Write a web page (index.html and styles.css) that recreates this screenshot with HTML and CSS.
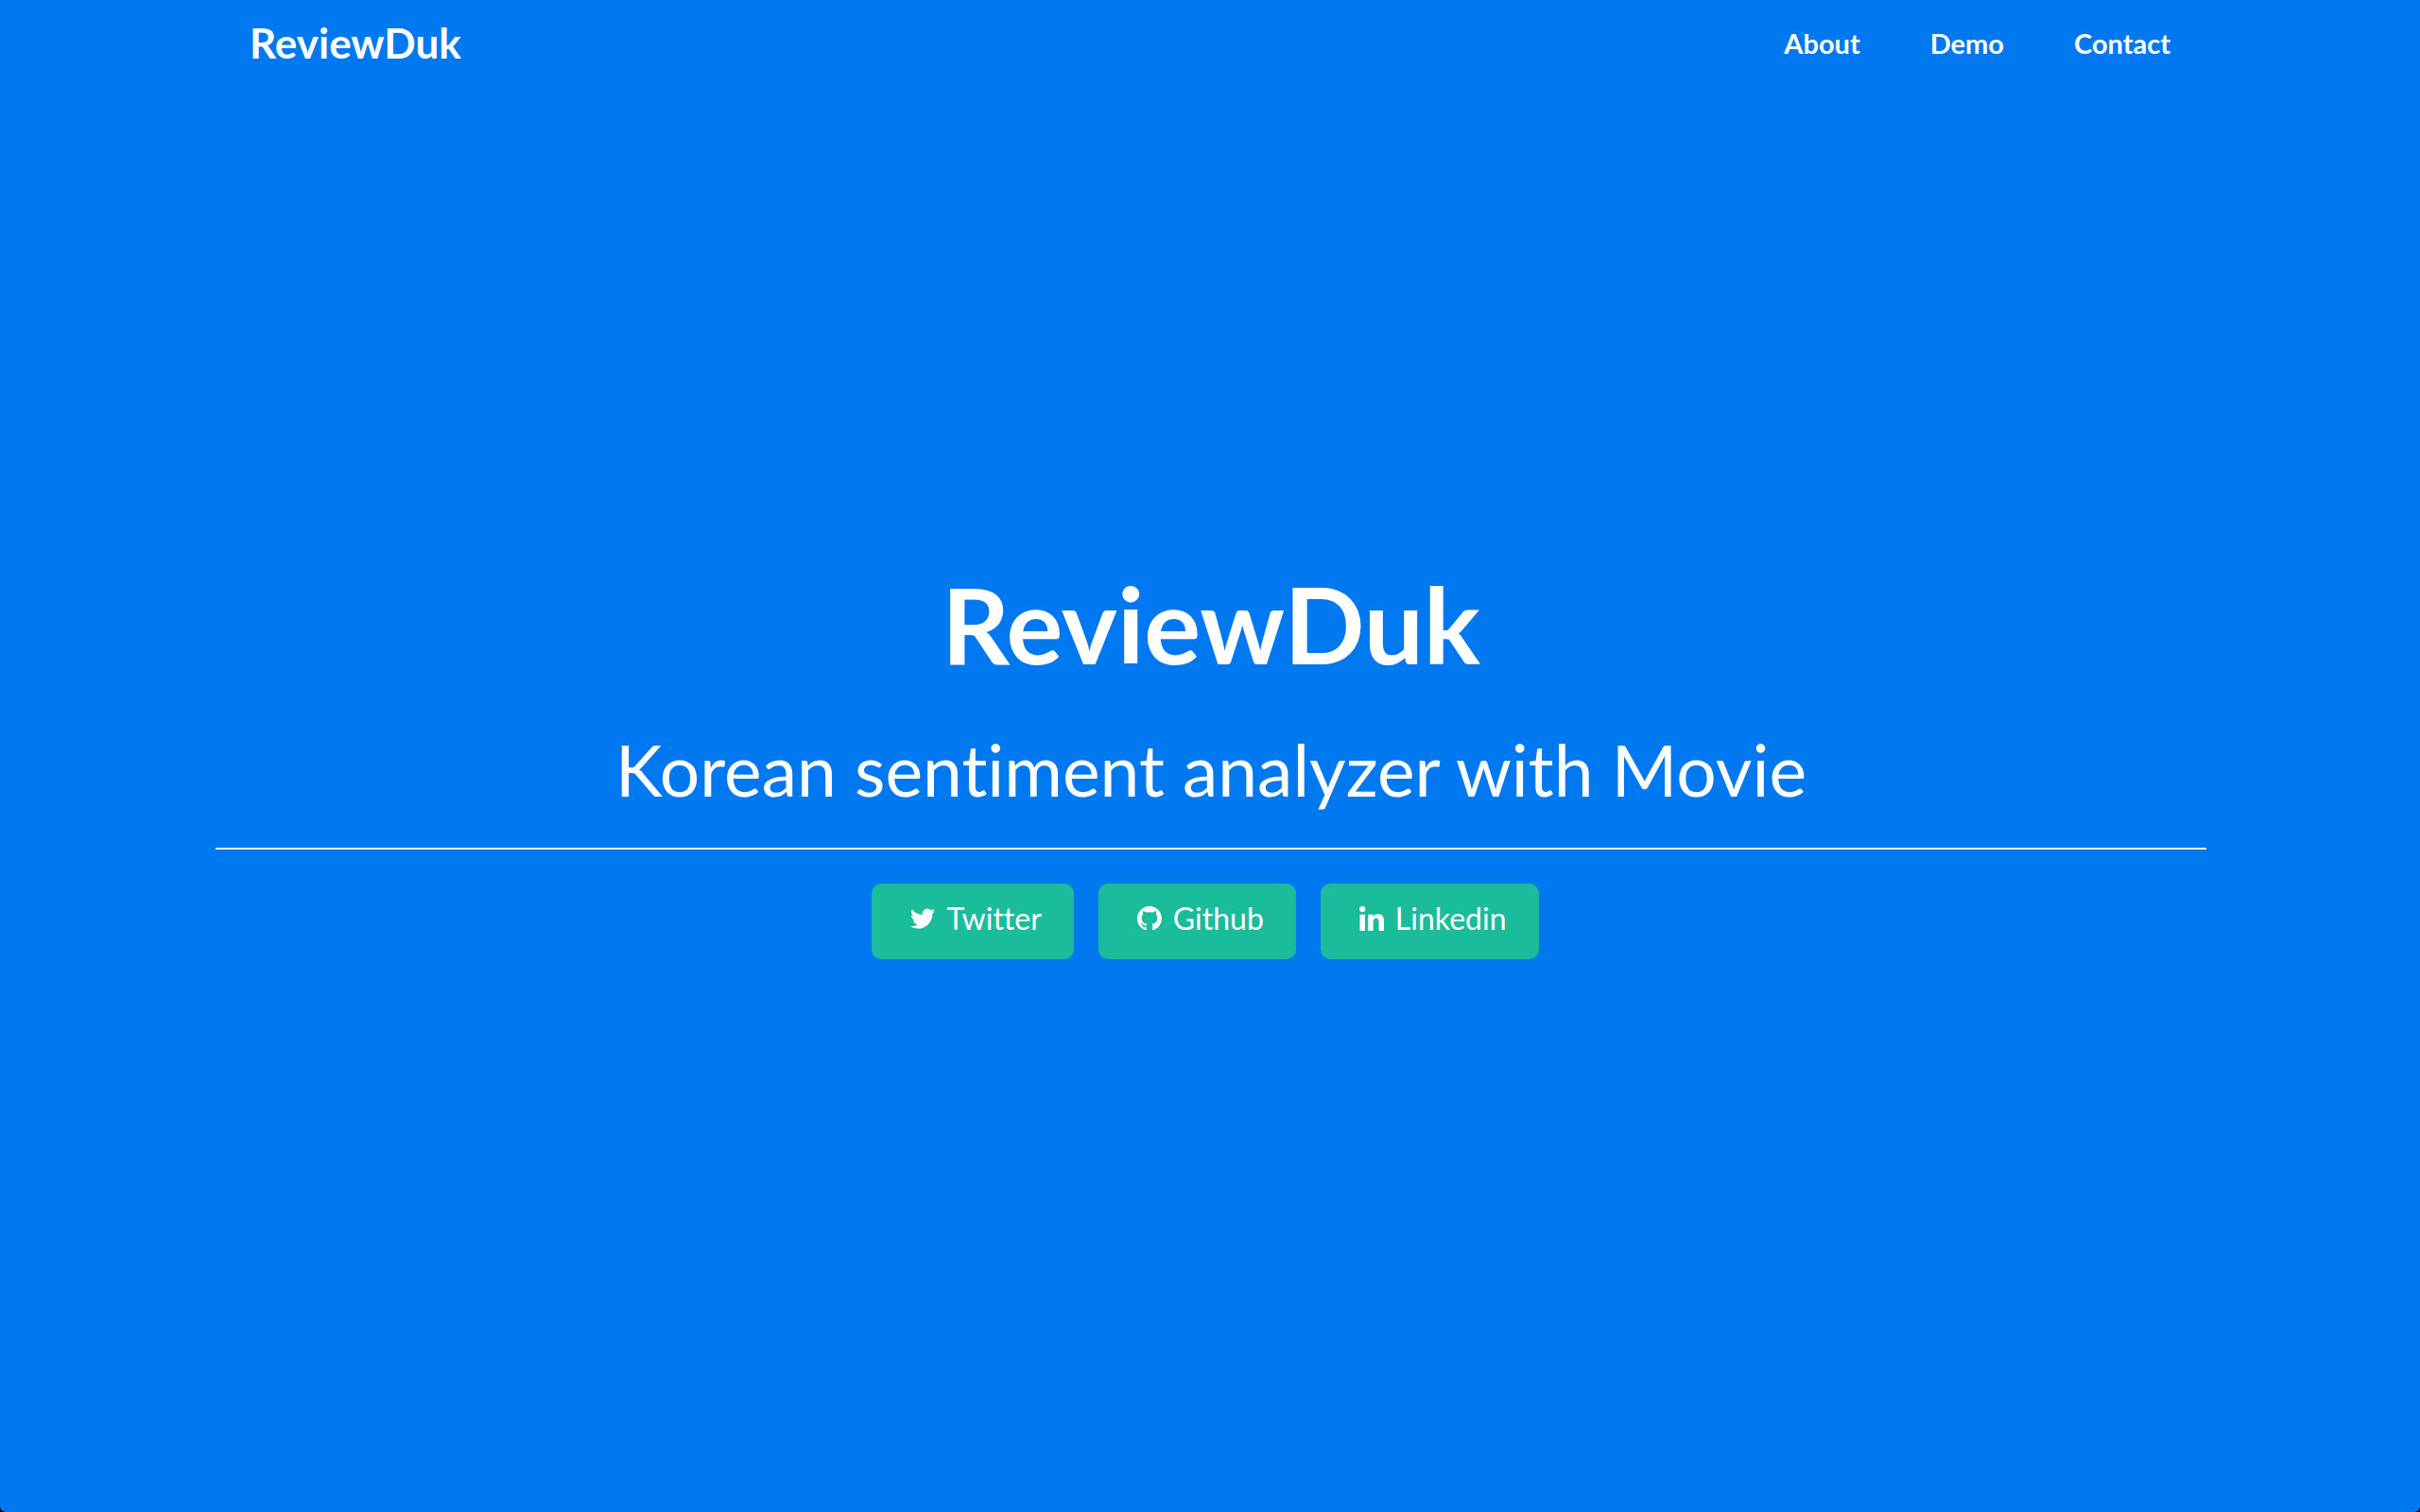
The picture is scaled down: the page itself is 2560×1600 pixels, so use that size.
FILE: index.html
```html
<!DOCTYPE html>
<html lang="en">
<head>
<meta charset="utf-8">
<title>ReviewDuk</title>
<link rel="stylesheet" href="styles.css">
</head>
<body>
<div class="page">
  <header class="navbar">
    <a class="brand" href="#top">ReviewDuk</a>
    <nav class="menu">
      <a href="#about">About</a>
      <a href="#demo">Demo</a>
      <a href="#contact">Contact</a>
    </nav>
  </header>
  <main class="hero" id="top">
    <h1 class="title">ReviewDuk</h1>
    <p class="tagline">Korean sentiment analyzer with Movie</p>
    <hr class="divider">
    <div class="social">
      <a class="btn" href="#twitter">
        <svg class="icon" viewBox="44 108 1576 1576" aria-hidden="true"><path d="M1620 408q-67 98-162 167 1 14 1 42 0 130-38 259.500t-115.500 248.500-184.500 210.500-258 146-323 54.500q-271 0-496-145 35 4 78 4 225 0 401-138-105-2-188-64.500t-114-159.500q33 5 61 5 43 0 85-11-112-23-185.500-111.500t-73.500-205.500v-4q68 38 146 41-66-44-105-115t-39-154q0-88 44-163 121 149 294.500 238.500t371.500 99.500q-8-38-8-74 0-134 94.500-228.500t228.500-94.500q140 0 236 102 109-21 205-78-37 115-142 178 93-10 186-50z"/></svg>
        <span>Twitter</span>
      </a>
      <a class="btn" href="#github">
        <svg class="icon" viewBox="0 0 16 16" aria-hidden="true"><path d="M8 0C3.580 0 0 3.580 0 8c0 3.540 2.290 6.530 5.470 7.590.4.070.55-.170.55-.380V13.640c-2 .370-2.530-.490-2.690-.940-.090-.230-.480-.940-.820-1.130-.280-.150-.680-.520-.010-.530.630-.010 1.080.580 1.230.820.720 1.210 1.870.870 2.330.660.070-.520.280-.870.510-1.070-1.780-.200-3.640-.890-3.640-3.950 0-.870.310-1.590.820-2.150-.080-.200-.360-1.020.080-2.120 0 0 .670-.210 2.200.820a7.600 7.600 0 0 1 4 0c1.530-1.040 2.200-.820 2.200-.820.440 1.100.160 1.920.080 2.120.510.560.820 1.270.820 2.150 0 3.070-1.870 3.750-3.650 3.950.290.250.540.730.540 1.480v2.200c0 .210.150.460.550.380A8 8 0 0 0 16 8c0-4.420-3.580-8-8-8z"/></svg>
        <span>Github</span>
      </a>
      <a class="btn" href="#linkedin">
        <svg class="icon" viewBox="0 0 24 24" aria-hidden="true"><path d="M.5 8h5v16h-5zM3 0a2.800 2.800 0 1 1 0 5.700A2.800 2.800 0 0 1 3 0zM8.500 8h4.800v2.200c.8-1.400 2.400-2.600 4.800-2.600 4.600 0 5.900 2.900 5.900 7.200V24h-5v-8.400c0-2.200-.4-3.900-2.600-3.900s-2.900 1.700-2.900 3.900V24h-5z"/></svg>
        <span>Linkedin</span>
      </a>
    </div>
  </main>
</div>
</body>
</html>
```
FILE: styles.css
```css
* {
  box-sizing: border-box;
}

body {
  margin: 0;
  background: #000;
  color: #fff;
  font-family: Lato, "Noto Sans", sans-serif;
  font-variant-ligatures: none;
}

a {
  color: inherit;
  text-decoration: none;
}

.page {
  display: flex;
  flex-direction: column;
  min-height: 100vh;
  padding: 0 226px 0 228px;
  background: #0078f0;
  border-radius: 0 0 6px 6px;
}

.navbar {
  display: flex;
  align-items: center;
  justify-content: space-between;
  height: 90px;
  padding: 0 38px 0 36px;
  font-weight: 700;
}

.brand {
  font-size: 44px;
}

.menu {
  display: flex;
  gap: 74px;
  font-size: 29px;
}

.hero {
  flex: 1;
  display: flex;
  flex-direction: column;
  justify-content: center;
  text-align: center;
  padding-bottom: 80px;
}

.title {
  margin: 0 0 44px;
  font-size: 112px;
  line-height: 130px;
  font-weight: 700;
}

.tagline {
  margin: 0 0 38px;
  font-size: 75px;
  line-height: 90px;
}

.divider {
  width: 100%;
  height: 2px;
  margin: 0 0 36px;
  border: 0;
  background: #eee;
}

.social {
  display: flex;
  justify-content: center;
  gap: 26px;
  padding-right: 12px;
}

.btn {
  display: flex;
  align-items: center;
  gap: 12px;
  height: 80px;
  padding: 0 34px 6px 41px;
  border-radius: 10px;
  background: #1abc9c;
  font-size: 32px;
  line-height: 40px;
}

.icon {
  width: 26px;
  height: 26px;
  fill: currentColor;
}
```
